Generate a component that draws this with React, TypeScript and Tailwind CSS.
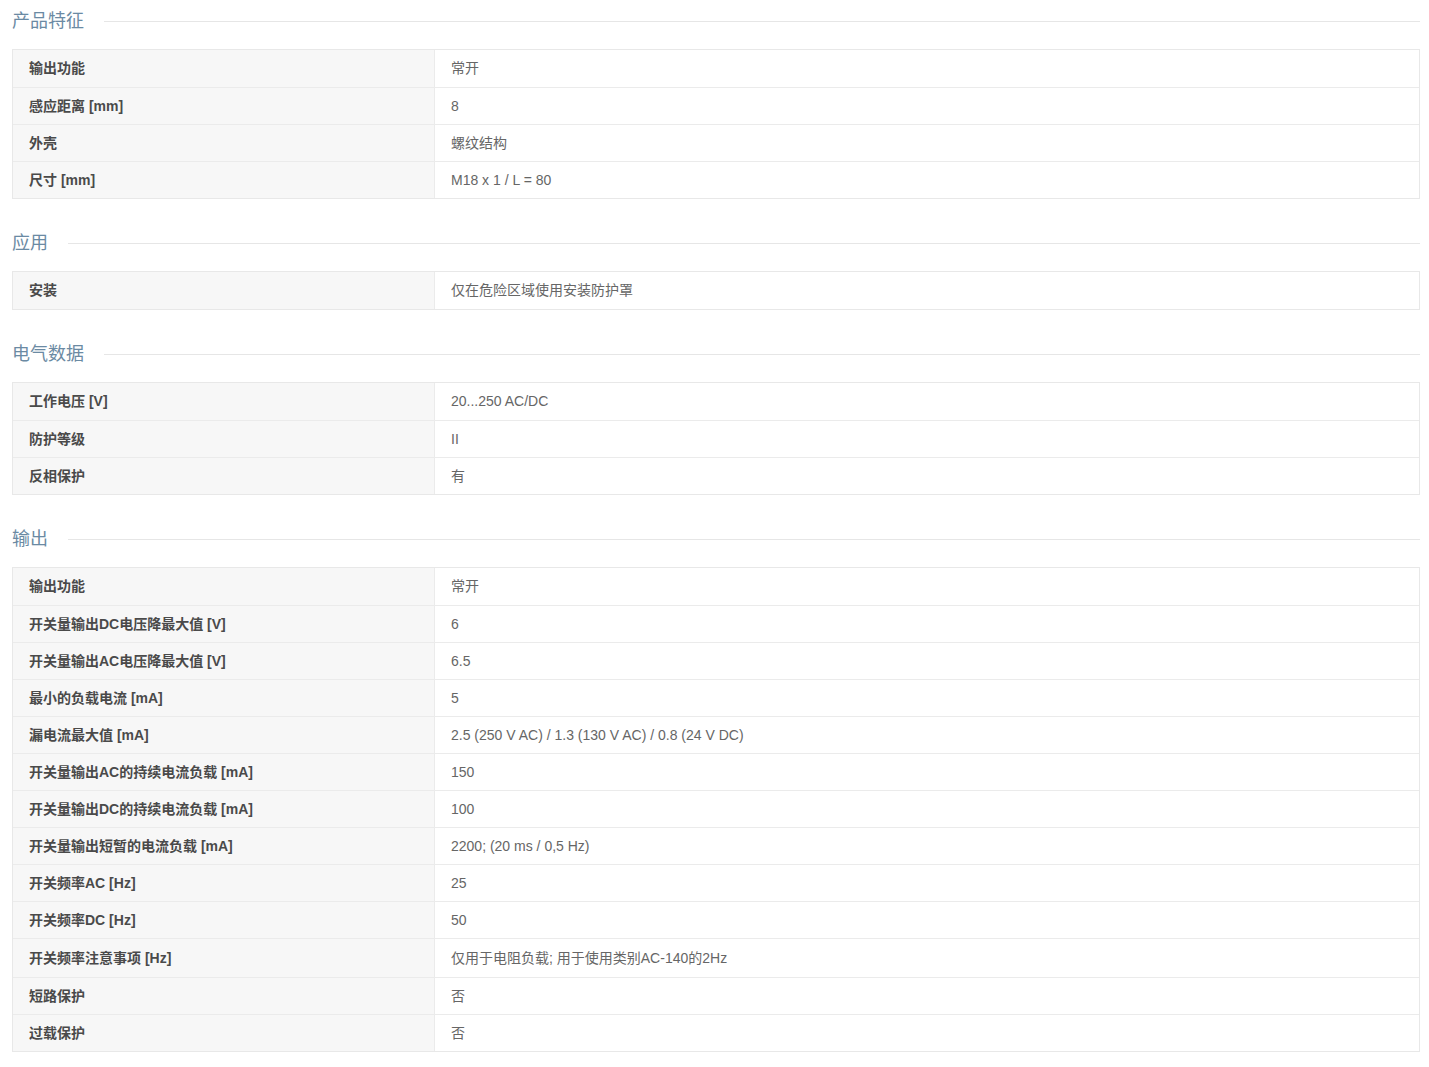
import React from 'react';

type Row = [string, string];

interface Section {
  title: string;
  rows: Row[];
}

const sections: Section[] = [
  {
    title: '产品特征',
    rows: [
      ['输出功能', '常开'],
      ['感应距离 [mm]', '8'],
      ['外壳', '螺纹结构'],
      ['尺寸 [mm]', 'M18 x 1 / L = 80'],
    ],
  },
  {
    title: '应用',
    rows: [['安装', '仅在危险区域使用安装防护罩']],
  },
  {
    title: '电气数据',
    rows: [
      ['工作电压 [V]', '20...250 AC/DC'],
      ['防护等级', 'II'],
      ['反相保护', '有'],
    ],
  },
  {
    title: '输出',
    rows: [
      ['输出功能', '常开'],
      ['开关量输出DC电压降最大值 [V]', '6'],
      ['开关量输出AC电压降最大值 [V]', '6.5'],
      ['最小的负载电流 [mA]', '5'],
      ['漏电流最大值 [mA]', '2.5 (250 V AC) / 1.3 (130 V AC) / 0.8 (24 V DC)'],
      ['开关量输出AC的持续电流负载 [mA]', '150'],
      ['开关量输出DC的持续电流负载 [mA]', '100'],
      ['开关量输出短暂的电流负载 [mA]', '2200; (20 ms / 0,5 Hz)'],
      ['开关频率AC [Hz]', '25'],
      ['开关频率DC [Hz]', '50'],
      ['开关频率注意事项 [Hz]', '仅用于电阻负载; 用于使用类别AC-140的2Hz'],
      ['短路保护', '否'],
      ['过载保护', '否'],
    ],
  },
];

const SectionHeading: React.FC<{ title: string; first?: boolean }> = ({ title, first }) => (
  <div className={`flex items-center h-6 ${first ? 'mt-[9px]' : 'mt-8'} mb-4`}>
    <h2 className="text-[18px] leading-6 text-[#6b8aa3] font-normal whitespace-nowrap">{title}</h2>
    <div className="flex-1 h-px bg-[#e6e6e6] ml-5" />
  </div>
);

const SpecTable: React.FC<{ rows: Row[] }> = ({ rows }) => (
  <div className="border border-[#e8e8e8]">
    {rows.map(([label, value], i) => (
      <div
        key={i}
        className={`flex text-[14px] ${i > 0 ? 'border-t border-[#ebebeb]' : ''} ${
          value.startsWith('仅用于') ? 'h-[39px]' : 'h-[37px]'
        }`}
      >
        <div className="w-[422px] shrink-0 bg-[#f7f7f7] border-r border-[#ebebeb] px-4 flex items-center font-bold text-[#4a4a4a]">
          {label}
        </div>
        <div className="flex-1 bg-white px-4 flex items-center text-[#666]">{value}</div>
      </div>
    ))}
  </div>
);

export default function App() {
  return (
    <div
      className="min-h-screen bg-white pl-3 pr-[9px] pb-3"
      style={{ fontFamily: '"Liberation Sans", Arial, "Noto Sans CJK SC", sans-serif' }}
    >
      {sections.map((s, i) => (
        <div key={s.title}>
          <SectionHeading title={s.title} first={i === 0} />
          <SpecTable rows={s.rows} />
        </div>
      ))}
    </div>
  );
}
